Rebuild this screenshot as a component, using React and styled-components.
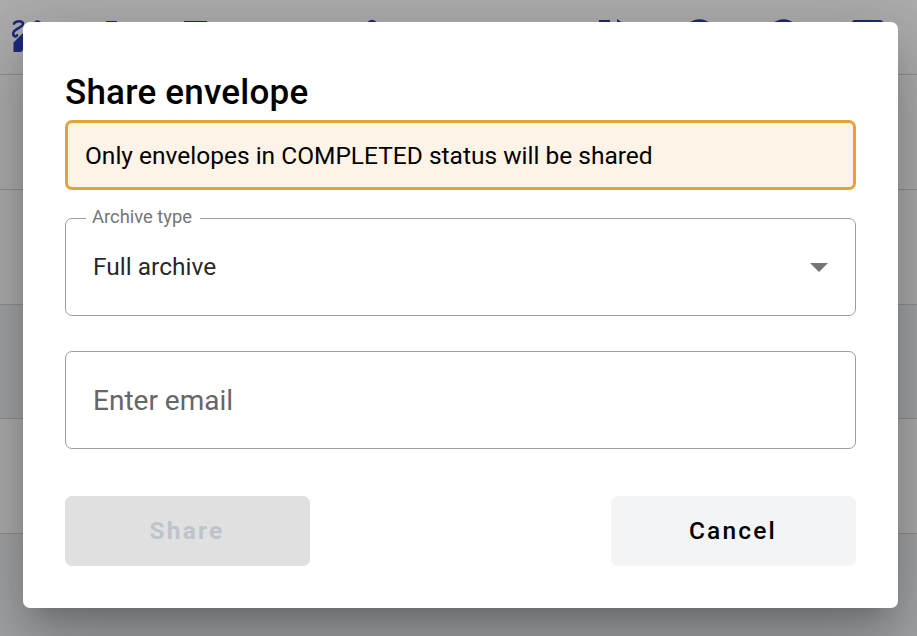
import React from "react";
import styled, { createGlobalStyle } from "styled-components";

const GlobalStyle = createGlobalStyle`
  *, *::before, *::after { box-sizing: border-box; }
  body {
    margin: 0;
    overflow: hidden;
    font-family: Roboto, "Liberation Sans", sans-serif;
    color: #000;
  }
`;

const Page = styled.div`
  display: grid;
  width: 100vw;
  height: 100vh;
  overflow: hidden;
  background: #fff;
`;

const Envelopes = styled.div`
  grid-area: 1 / 1;
  min-width: 0;
  height: 100vh;
  overflow: hidden;
`;

const Toolbar = styled.header`
  display: flex;
  height: 75px;
  padding-top: 20px;
  margin-left: -15px;
  border-bottom: 1px solid #d6d6d6;
`;

const Slot = styled.div`
  flex: 0 0 84px;
  display: flex;
  justify-content: center;
`;

const Icon = styled.svg`
  width: 32px;
  height: 32px;
  fill: #2b3fb8;
  stroke: none;
  overflow: visible;
`;

const Row = styled.div`
  height: ${(p) => p.$height}px;
  border-bottom: 1px solid #d6d6d6;
  background: ${(p) => (p.$shaded ? "#f1f3f7" : "#fff")};
`;

const Backdrop = styled.div`
  grid-area: 1 / 1;
  z-index: 1;
  min-width: 0;
  height: 100vh;
  padding: 22px 19px 28px 23px;
  background: rgba(0, 0, 0, 0.32);
`;

const Dialog = styled.section`
  display: flex;
  flex-direction: column;
  height: 100%;
  padding: 42px;
  border-radius: 7px;
  background: #fff;
  box-shadow:
    0 19.25px 26.25px -12.25px rgba(0, 0, 0, 0.2),
    0 42px 66.5px 5.25px rgba(0, 0, 0, 0.14),
    0 15.75px 80.5px 14px rgba(0, 0, 0, 0.12);
`;

const Title = styled.h2`
  margin: 0;
  height: 56px;
  font-size: 35px;
  font-weight: 500;
  line-height: 58px;
  letter-spacing: 0.22px;
`;

const Notice = styled.div`
  display: flex;
  align-items: center;
  height: 70px;
  padding: 0 17px;
  border: 3px solid #e3a23c;
  border-radius: 7px;
  background: #fdf4e7;
  font-size: 24.5px;
`;

const SelectField = styled.div`
  display: flex;
  align-items: center;
  justify-content: space-between;
  position: relative;
  height: 98px;
  margin-top: 28px;
  padding: 0 27px;
  border: 1px solid #9e9e9e;
  border-radius: 7px;
  font-size: 24.5px;
  color: rgba(0, 0, 0, 0.87);
`;

const SelectValue = styled.span`
  padding-bottom: 2px;
`;

const FloatingLabel = styled.span`
  position: absolute;
  left: 20px;
  top: -14px;
  padding: 0 8px 0 6px;
  background: #fff;
  font-size: 18.375px;
  line-height: 24px;
  color: #757575;
`;

const Arrow = styled.svg`
  width: 18px;
  height: 9px;
  fill: #757575;
`;

const EmailInput = styled.input`
  height: 98px;
  margin: 35px 0 0;
  padding: 0 27px;
  border: 1px solid #9e9e9e;
  border-radius: 7px;
  outline: none;
  background: #fff;
  font-family: inherit;
  font-size: 28px;

  &::placeholder {
    color: #666;
    opacity: 1;
  }
`;

const Actions = styled.footer`
  display: flex;
  justify-content: space-between;
  margin-top: 47px;
`;

const Button = styled.button`
  width: 245px;
  height: 70px;
  padding: 0 1px 2px 0;
  border: 0;
  border-radius: 7px;
  background: ${(p) => (p.disabled ? "#e0e0e0" : "#f3f4f6")};
  color: ${(p) => (p.disabled ? "#bdc4ca" : "#000")};
  font-family: inherit;
  font-size: 24.5px;
  font-weight: ${(p) => (p.disabled ? 700 : 500)};
  letter-spacing: 2.19px;
`;

const icons = [
  <g key="sign">
    <path d="M3 3.6C5 .6 11.5.4 12 3.8S2.6 9 2.3 13s3 4 3.7 2.3" fill="none" stroke="#2b3fb8" strokeWidth="2.6" strokeLinecap="round" />
    <path d="M2.5 22.5 23 2q4-4 8 1t0 7L10 32H2.5z" />
  </g>,
  <path key="download" d="M11 1h11v12h6L16 26 4 13h7z" />,
  <path key="file" d="M5 1h23v29H5z" />,
  null,
  <circle key="user" cx="25" cy="5" r="5.2" />,
  null,
  null,
  <path key="branch" d="M0 0h11v11H0zM18-1l10 7-10 7z" />,
  <circle key="info" cx="16.5" cy="15" r="15.7" />,
  <circle key="help" cx="16.5" cy="15" r="15.7" />,
  <rect key="card" x="1" y="0" width="31" height="26" rx="3" />,
];

const rows = [
  { height: 115, shaded: false },
  { height: 115, shaded: false },
  { height: 114, shaded: true },
  { height: 115, shaded: false },
  { height: 115, shaded: true },
];

export default function App() {
  return (
    <Page>
      <GlobalStyle />
      <Envelopes aria-hidden="true">
        <Toolbar>
          {icons.map((icon, i) => (
            <Slot key={i}>{icon && <Icon viewBox="0 0 32 32">{icon}</Icon>}</Slot>
          ))}
        </Toolbar>
        {rows.map((row, i) => (
          <Row key={i} $height={row.height} $shaded={row.shaded} />
        ))}
      </Envelopes>
      <Backdrop>
        <Dialog role="dialog" aria-labelledby="share-title">
          <Title id="share-title">Share envelope</Title>
          <Notice>Only envelopes in COMPLETED status will be shared</Notice>
          <SelectField>
            <FloatingLabel>Archive type</FloatingLabel>
            <SelectValue>Full archive</SelectValue>
            <Arrow viewBox="0 0 18 9"><path d="M0 0h18L9 9z" /></Arrow>
          </SelectField>
          <EmailInput type="email" placeholder="Enter email" />
          <Actions>
            <Button disabled>Share</Button>
            <Button>Cancel</Button>
          </Actions>
        </Dialog>
      </Backdrop>
    </Page>
  );
}
